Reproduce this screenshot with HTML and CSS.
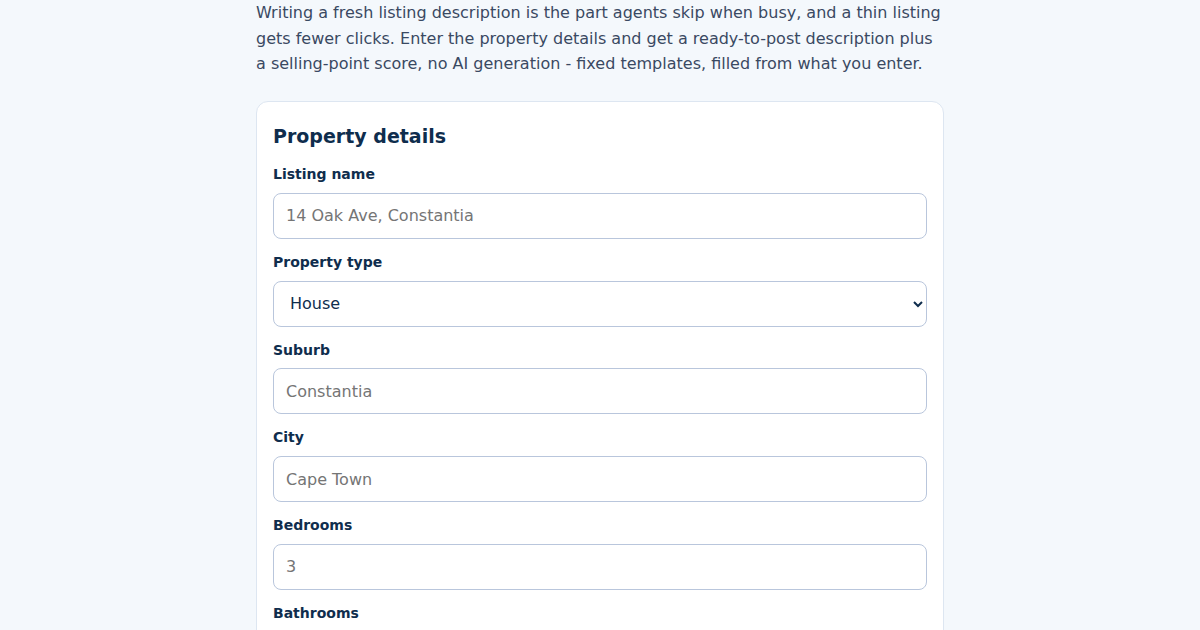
FILE: index.html
```html
<!DOCTYPE html>
<html lang="en">
<head>
<meta charset="utf-8">
<title>Listing description</title>
<link rel="stylesheet" href="styles.css">
</head>
<body>
<main class="wrap">
  <p class="intro">Writing a fresh listing description is the part agents skip when busy, and a thin listing gets fewer clicks. Enter the property details and get a ready-to-post description plus a selling-point score, no AI generation - fixed templates, filled from what you enter.</p>
  <section class="card">
    <h2 class="card-title">Property details</h2>
    <div class="field">
      <label class="label" for="name">Listing name</label>
      <input class="input" id="name" type="text" placeholder="14 Oak Ave, Constantia">
    </div>
    <div class="field">
      <label class="label" for="type">Property type</label>
      <select class="input select" id="type">
        <option>House</option>
        <option>Apartment</option>
        <option>Townhouse</option>
      </select>
    </div>
    <div class="field">
      <label class="label" for="suburb">Suburb</label>
      <input class="input" id="suburb" type="text" placeholder="Constantia">
    </div>
    <div class="field">
      <label class="label" for="city">City</label>
      <input class="input" id="city" type="text" placeholder="Cape Town">
    </div>
    <div class="field">
      <label class="label" for="beds">Bedrooms</label>
      <input class="input" id="beds" type="text" placeholder="3">
    </div>
    <div class="field">
      <label class="label" for="baths">Bathrooms</label>
      <input class="input" id="baths" type="text" placeholder="2">
    </div>
  </section>
</main>
</body>
</html>
```
FILE: styles.css
```css
html, body {
  margin: 0;
  padding: 0;
  background: #f4f8fc;
  font-family: "DejaVu Sans", sans-serif;
  color: #0f2d4d;
}
.wrap {
  width: 688px;
  margin: 0 auto;
}
.intro {
  margin: 0 0 24px;
  font-size: 16px;
  line-height: 25.5px;
  color: #3a4962;
}
.card {
  background: #ffffff;
  border: 1px solid #dde6f1;
  border-radius: 12px;
  padding: 16px;
}
.card-title {
  margin: 5px 0 16.6px;
  font-size: 19px;
  line-height: 26px;
  font-weight: bold;
  color: #0f2d4d;
}
.field {
  margin-bottom: 14px;
}
.label {
  display: block;
  font-size: 14px;
  line-height: 19.75px;
  font-weight: bold;
  color: #0f2d4d;
  margin-bottom: 8px;
}
.input {
  display: block;
  box-sizing: border-box;
  width: 100%;
  height: 46px;
  padding: 0 12px;
  border: 1px solid #b9c6dc;
  border-radius: 8px;
  background: #ffffff;
  font-family: "DejaVu Sans", sans-serif;
  font-size: 16px;
  color: #0f2d4d;
}
.input::placeholder {
  color: #757575;
}
.select {
  padding: 0 8px 0 12px;
}
```
